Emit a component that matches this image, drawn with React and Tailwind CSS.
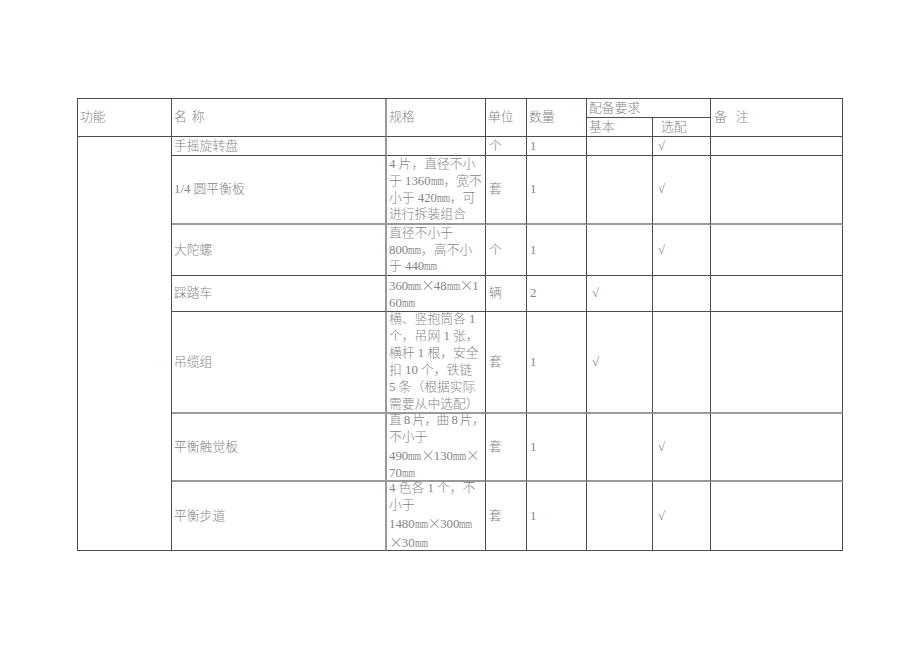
import React from "react";

const X = () => (
  <span className="inline-block w-[12.8px] text-center text-[14px]" style={{ fontFamily: '"Noto Sans CJK SC", sans-serif' }}>
    ×
  </span>
);
const M = () => (
  <span className="inline-block w-[12.8px]">
    <span className="inline-block origin-left scale-x-[0.66]">mm</span>
  </span>
);

const cell = "border-r border-b border-[#4d4d4d] flex items-center px-[2px] overflow-visible whitespace-nowrap";
const soft = "border-b-2 border-b-[#9a9a9a]";

const rows = [
  { name: "手摇旋转盘", spec: null, unit: "个", qty: "1", basic: "", opt: "√" },
  {
    name: "1/4 圆平衡板",
    spec: [
      "4 片，直径不小",
      <>于 1360<M />，宽不</>,
      <>小于 420<M />，可</>,
      "进行拆装组合",
    ],
    unit: "套", qty: "1", basic: "", opt: "√", soft: true,
  },
  {
    name: "大陀螺",
    spec: ["直径不小于", <>800<M />，高不小</>, <>于 440<M /></>],
    unit: "个", qty: "1", basic: "", opt: "√",
  },
  {
    name: "踩踏车",
    spec: [<>360<M /><X />48<M /><X />1</>, <>60<M /></>],
    unit: "辆", qty: "2", basic: "√", opt: "",
  },
  {
    name: "吊缆组",
    spec: [
      "横、竖抱筒各 1",
      "个，吊网 1 张，",
      "横杆 1 根，安全",
      "扣 10 个，铁链",
      "5 条（根据实际",
      "需要从中选配）",
    ],
    unit: "套", qty: "1", basic: "√", opt: "", soft: true,
  },
  {
    name: "平衡触觉板",
    spec: [
      <span className="tracking-[-0.6px]">直 8 片，曲 8 片，</span>,
      "不小于",
      <>490<M /><X />130<M /><X /></>,
      <>70<M /></>,
    ],
    unit: "套", qty: "1", basic: "", opt: "√", soft: true,
  },
  {
    name: "平衡步道",
    spec: ["4 色各 1 个，不", "小于", <>1480<M /><X />300<M /></>, <><X />30<M /></>],
    unit: "套", qty: "1", basic: "", opt: "√",
  },
];

export default function App() {
  return (
    <div
      className="w-[920px] h-[651px] bg-white pt-[98px] pl-[77px]"
      style={{ fontFamily: '"Liberation Serif", "Noto Sans CJK SC", serif' }}
    >
      <div className="grid w-[766px] grid-cols-[94px_215px_99px_41px_60px_66px_58px_132px] grid-rows-[19px_19px_19px_69px_51px_36px_102px_68px_69px] border-t border-l border-[#4d4d4d] text-[12.8px] leading-[17px] text-[#858585] font-light">
        <div className={`${cell} row-span-2`}>功能</div>
        <div className={`${cell} row-span-2 border-r-2 border-r-[#9a9a9a] gap-[5px]`}>
          <span>名</span>
          <span>称</span>
        </div>
        <div className={`${cell} row-span-2`}>规格</div>
        <div className={`${cell} row-span-2`}>单位</div>
        <div className={`${cell} row-span-2`}>数量</div>
        <div className={`${cell} col-span-2`}>配备要求</div>
        <div className={`${cell} row-span-2 gap-[9px] pl-[3px]`}>
          <span>备</span>
          <span>注</span>
        </div>
        <div className={cell}>基本</div>
        <div className={`${cell} pl-[8px]`}>选配</div>

        <div className={`${cell} row-span-7`}></div>
        {rows.map((r, i) => {
          const s = r.soft ? soft : "";
          return (
            <React.Fragment key={i}>
              <div className={`${cell} ${s} border-r-2 border-r-[#9a9a9a]`}>{r.name}</div>
              <div className={`${cell} ${s}`}>
                {r.spec && (
                  <div className="flex flex-col leading-[16.9px]">
                    {r.spec.map((l, j) => (
                      <div key={j}>{l}</div>
                    ))}
                  </div>
                )}
              </div>
              <div className={`${cell} ${s} pl-[3px]`}>{r.unit}</div>
              <div className={`${cell} ${s} pl-[3px]`}>{r.qty}</div>
              <div className={`${cell} ${s} pl-[5px]`}>{r.basic}</div>
              <div className={`${cell} ${s} pl-[5px]`}>{r.opt}</div>
              <div className={`${cell} ${s}`}></div>
            </React.Fragment>
          );
        })}
      </div>
    </div>
  );
}
